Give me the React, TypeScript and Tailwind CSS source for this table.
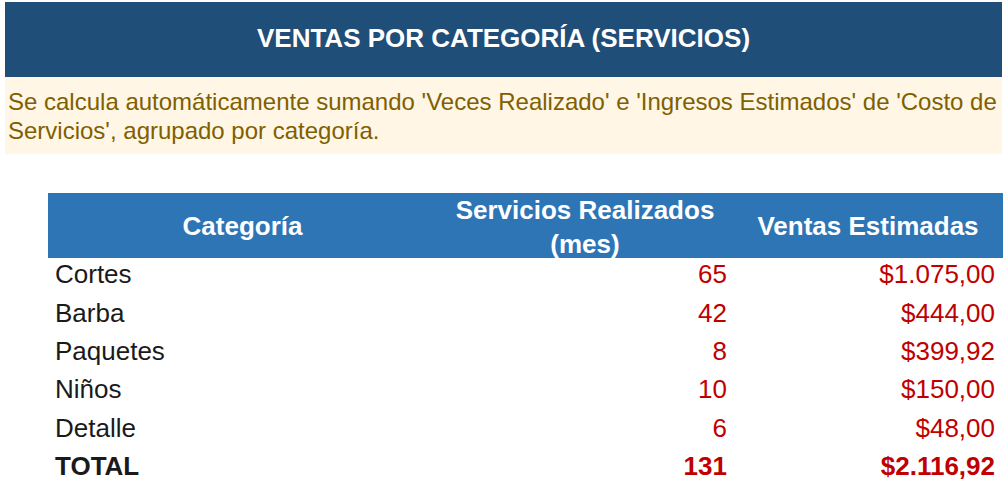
import React from "react";

const rows = [
  { cat: "Cortes", n: "65", v: "$1.075,00" },
  { cat: "Barba", n: "42", v: "$444,00" },
  { cat: "Paquetes", n: "8", v: "$399,92" },
  { cat: "Niños", n: "10", v: "$150,00" },
  { cat: "Detalle", n: "6", v: "$48,00" },
];

export default function App() {
  return (
    <div className="w-[1008px] h-[487px] bg-white pt-[2px] font-['Liberation_Sans',Arial,sans-serif] overflow-hidden">
      <div className="ml-[5px] w-[997px] h-[75px] bg-[#1f4e79] flex items-center justify-center text-white font-bold text-[26px] pb-[2px]">
        VENTAS POR CATEGORÍA (SERVICIOS)
      </div>
      <div className="ml-[5px] w-[997px] h-[77px] bg-[#fff6e6] text-[#7f6000] text-[24px] leading-[29px] pl-[3px] pt-[10px]">
        <div className="whitespace-nowrap">
          Se calcula automáticamente sumando 'Veces Realizado' e 'Ingresos Estimados' de 'Costo de
        </div>
        <div className="whitespace-nowrap">Servicios', agrupado por categoría.</div>
      </div>
      <div className="mt-[39px] ml-[48px] w-[955px]">
        <div className="grid grid-cols-[389px_296px_270px] grid-rows-[65px] h-[65px] bg-[#2e75b6] text-white font-bold text-[26px]">
          <div className="flex items-center justify-center text-center leading-[30px]">Categoría</div>
          <div className="flex items-center justify-center text-center leading-[34px] pt-[3px] min-h-0">
            <span>
              Servicios Realizados
              <br />
              (mes)
            </span>
          </div>
          <div className="flex items-center justify-center text-center leading-[30px]">Ventas Estimadas</div>
        </div>
        {rows.map((r) => (
          <div
            key={r.cat}
            className="grid grid-cols-[389px_296px_270px] h-[38.4px] items-center text-[26px] leading-[30px] pb-[6px]"
          >
            <div className="pl-[7px] text-[#1a1a1a]">{r.cat}</div>
            <div className="pr-[6px] text-right text-[#c00000]">{r.n}</div>
            <div className="pr-[8px] text-right text-[#c00000]">{r.v}</div>
          </div>
        ))}
        <div className="grid grid-cols-[389px_296px_270px] h-[38.4px] items-center text-[26px] leading-[30px] font-bold pb-[6px]">
          <div className="pl-[7px] text-[#1a1a1a]">TOTAL</div>
          <div className="pr-[6px] text-right text-[#c00000]">131</div>
          <div className="pr-[8px] text-right text-[#c00000]">$2.116,92</div>
        </div>
      </div>
    </div>
  );
}
